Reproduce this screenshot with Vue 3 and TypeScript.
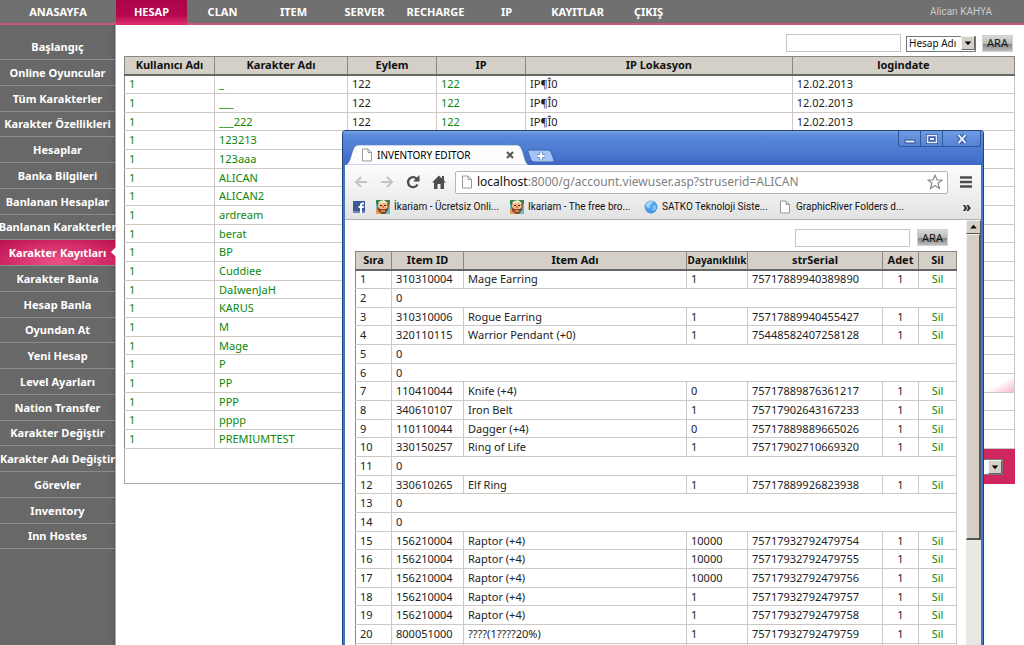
<script setup lang="ts">
interface LogRow {
  user: string
  name: string
  action?: string
  ip?: string
  place?: string
  date?: string
}

interface Item {
  id: string
  name?: string
  durability?: string
  serial?: string
}

const topMenu: string[] = ['HESAP', 'CLAN', 'ITEM', 'SERVER', 'RECHARGE', 'IP', 'KAYITLAR', 'ÇIKIŞ']
const activeTop = 'HESAP'

const sideMenu: string[] = [
  'Başlangıç', 'Online Oyuncular', 'Tüm Karakterler', 'Karakter Özellikleri', 'Hesaplar',
  'Banka Bilgileri', 'Banlanan Hesaplar', 'Banlanan Karakterler', 'Karakter Kayıtları',
  'Karakter Banla', 'Hesap Banla', 'Oyundan At', 'Yeni Hesap', 'Level Ayarları',
  'Nation Transfer', 'Karakter Değiştir', 'Karakter Adı Değiştir', 'Görevler', 'Inventory', 'Inn Hostes',
]
const activeSide = 'Karakter Kayıtları'

const full = { action: '122', ip: '122', place: 'IP¶Î0', date: '12.02.2013' }
const logs: LogRow[] = [
  { user: '1', name: '_', ...full },
  { user: '1', name: '___', ...full },
  { user: '1', name: '___222', ...full },
  ...[
    '123213', '123aaa', 'ALICAN', 'ALICAN2', 'ardream', 'berat', 'BP', 'Cuddiee', 'DaIwenJaH',
    'KARUS', 'M', 'Mage', 'P', 'PP', 'PPP', 'pppp', 'PREMIUMTEST',
  ].map((name) => ({ user: '1', name })),
]

const items: Item[] = [
  { id: '310310004', name: 'Mage Earring', durability: '1', serial: '75717889940389890' },
  { id: '0' },
  { id: '310310006', name: 'Rogue Earring', durability: '1', serial: '75717889940455427' },
  { id: '320110115', name: 'Warrior Pendant (+0)', durability: '1', serial: '75448582407258128' },
  { id: '0' },
  { id: '0' },
  { id: '110410044', name: 'Knife (+4)', durability: '0', serial: '75717889876361217' },
  { id: '340610107', name: 'Iron Belt', durability: '1', serial: '75717902643167233' },
  { id: '110110044', name: 'Dagger (+4)', durability: '0', serial: '75717889889665026' },
  { id: '330150257', name: 'Ring of Life', durability: '1', serial: '75717902710669320' },
  { id: '0' },
  { id: '330610265', name: 'Elf Ring', durability: '1', serial: '75717889926823938' },
  { id: '0' },
  { id: '0' },
  { id: '156210004', name: 'Raptor (+4)', durability: '10000', serial: '75717932792479754' },
  { id: '156210004', name: 'Raptor (+4)', durability: '10000', serial: '75717932792479755' },
  { id: '156210004', name: 'Raptor (+4)', durability: '10000', serial: '75717932792479756' },
  { id: '156210004', name: 'Raptor (+4)', durability: '1', serial: '75717932792479757' },
  { id: '156210004', name: 'Raptor (+4)', durability: '1', serial: '75717932792479758' },
  { id: '800051000', name: '????(1????20%)', durability: '1', serial: '75717932792479759' },
]

const bookmarks = [
  { icon: 'fb', text: '' },
  { icon: 'face', text: 'İkariam - Ücretsiz Onli...' },
  { icon: 'face', text: 'Ikariam - The free bro...' },
  { icon: 'globe', text: 'SATKO Teknoloji Siste...' },
  { icon: 'page', text: 'GraphicRiver Folders d...' },
]
</script>

<template>
  <div class="app">
    <header class="topbar">
      <nav class="topnav" aria-label="Ana menü">
        <a href="#" class="home">ANASAYFA</a>
        <a v-for="t in topMenu" :key="t" href="#" :class="{ active: t === activeTop }">{{ t }}</a>
      </nav>
      <span class="who">Alican KAHYA</span>
    </header>

    <div class="body">
      <nav class="side" aria-label="Yan menü">
        <a v-for="s in sideMenu" :key="s" href="#" :class="{ active: s === activeSide }">{{ s }}</a>
      </nav>

      <main class="main">
        <form class="search" @submit.prevent>
          <input class="box" type="text" aria-label="Arama" />
          <span class="pick">
            <select aria-label="Arama alanı"><option>Hesap Adı</option></select>
            <svg class="arrow" viewBox="0 0 13 13" aria-hidden="true"><path d="M3 5h7L6.500 9z" /></svg>
          </span>
          <button class="go" type="submit">ARA</button>
        </form>

        <table class="grid logs">
          <colgroup><col class="l1" /><col class="l2" /><col class="l3" /><col class="l3" /><col class="l4" /><col class="l5" /></colgroup>
          <thead>
            <tr><th>Kullanıcı Adı</th><th>Karakter Adı</th><th>Eylem</th><th>IP</th><th>IP Lokasyon</th><th>logindate</th></tr>
          </thead>
          <tbody>
            <tr v-for="(r, i) in logs" :key="i">
              <td><a href="#">{{ r.user }}</a></td>
              <td><a href="#">{{ r.name }}</a></td>
              <td>{{ r.action }}</td>
              <td><a v-if="r.ip" href="#">{{ r.ip }}</a></td>
              <td>{{ r.place }}</td>
              <td :class="{ glow: i === 16 }">{{ r.date }}</td>
            </tr>
          </tbody>
        </table>
        <div class="pager">
          <div class="pagebox">
            <span class="pick">
              <select aria-label="Sayfa"></select>
              <svg class="arrow" viewBox="0 0 13 13" aria-hidden="true"><path d="M3 5h7L6.500 9z" /></svg>
            </span>
          </div>
        </div>
      </main>
    </div>

    <section class="window" aria-label="INVENTORY EDITOR">
      <div class="title">
        <div class="tab">
          <svg class="tabshape" viewBox="0 0 184 20" preserveAspectRatio="none" aria-hidden="true">
            <path d="M0 20 C4 19 5 15 7 8 C9 2 10 0 14 0 H171 C175 0 176 2 178 8 C180 15 181 19 184 20 Z" fill="#fdfdfe" stroke="#4468a8" stroke-opacity=".5" />
          </svg>
          <svg class="page" viewBox="0 0 12 14" aria-hidden="true"><path d="M1.500 1h5.500l3.500 3.500V13h-9zM7 1v3.500h3.500" /></svg>
          <span class="tabname">INVENTORY EDITOR</span>
          <button class="x" type="button" aria-label="Sekmeyi kapat">
            <svg viewBox="0 0 8 8"><path d="M1 1l6 6M7 1L1 7" /></svg>
          </button>
        </div>
        <button class="newtab" type="button" aria-label="Yeni sekme">
          <svg viewBox="0 0 30 14">
            <path d="M3 1h19q2 0 3 2l3 8q1 2-2 2H9q-3 0-4-2L2 3q-1-2 1-2z" fill="#a3c4f4" stroke="#3e65ae" />
            <path d="M15 3v8M11 7h8" stroke="#7597d2" stroke-width="4" />
            <path d="M15 3.500v7M11.500 7h7" stroke="#fff" stroke-width="2" />
          </svg>
        </button>
        <div class="controls">
          <button type="button" aria-label="Küçült"><svg viewBox="0 0 12 12"><path d="M1 7h10v3H1z" fill="#e6efff" stroke="#2c4c8c" /></svg></button>
          <button type="button" aria-label="Büyüt"><svg viewBox="0 0 12 12"><path d="M1.500 2.500h9v7h-9z" fill="none" stroke="#2c4c8c" stroke-width="3" /><path d="M1.500 2.500h9v7h-9z" fill="#3a62ac" stroke="#e0ebff" stroke-width="1.500" /><path d="M4 5h4v2H4z" fill="#e0ebff" /></svg></button>
          <button type="button" class="wide" aria-label="Kapat"><svg viewBox="0 0 12 12"><path d="M2.500 2l7 8M9.500 2l-7 8" stroke="#2c4c8c" stroke-width="4" /><path d="M2.500 2l7 8M9.500 2l-7 8" stroke="#e0ebff" stroke-width="2" /></svg></button>
        </div>
      </div>

      <div class="chrome">
        <div class="tools">
          <button type="button" aria-label="Geri"><svg viewBox="0 0 14 14"><path d="M13 7H2M7 2L2 7l5 5" fill="none" stroke="#c3c4c6" stroke-width="2" /></svg></button>
          <button type="button" aria-label="İleri"><svg viewBox="0 0 14 14"><path d="M1 7h11M7 2l5 5-5 5" fill="none" stroke="#c3c4c6" stroke-width="2" /></svg></button>
          <button type="button" aria-label="Yenile"><svg viewBox="0 0 14 14"><path d="M11.500 9.500A5 5 0 1 1 10.500 3.500" fill="none" stroke="#4d4d4d" stroke-width="2.300" /><path d="M13.500 0v6.500H7z" fill="#4d4d4d" /></svg></button>
          <button type="button" aria-label="Giriş"><svg viewBox="0 0 14 14"><path d="M7 0.500L0 7.500h2V14h3.500V9h3v5H12V7.500h2l-2-2V1h-2v2.500z" fill="#4d4d4d" /></svg></button>
          <div class="omni">
            <svg class="page" viewBox="0 0 12 14" aria-hidden="true"><path d="M1.500 1h5.500l3.500 3.500V13h-9zM7 1v3.500h3.500" /></svg>
            <span class="url"><b>localhost</b>:8000/g/account.viewuser.asp?struserid=ALICAN</span>
            <svg class="star" viewBox="0 0 16 16" aria-hidden="true"><path d="M8 1l2 5h5.200L11 9.300l1.700 5.500L8 11.500l-4.700 3.300L5 9.300.8 6H6z" fill="#fff" stroke="#8b8b8b" stroke-width="1.200" stroke-linejoin="round" /></svg>
          </div>
          <button type="button" class="menu" aria-label="Menü"><svg viewBox="0 0 12 12"><path d="M0 1.500h12M0 6h12M0 10.500h12" stroke="#4d4d4d" stroke-width="2.400" /></svg></button>
        </div>
        <div class="marks">
          <a v-for="(b, i) in bookmarks" :key="i" href="#" :aria-label="b.text || 'Facebook'">
            <svg v-if="b.icon === 'fb'" viewBox="0 0 14 14"><path d="M1 1h12v12H1z" fill="#3b5998" /><path d="M1 11h12v2H1z" fill="#6d86bd" /><path d="M8 13V8H6.500V6H8V5q0-2.500 2.500-2.500H12v2h-1q-1 0-1 1V6h2l-.3 2H10v5z" fill="#fff" /></svg>
            <svg v-else-if="b.icon === 'face'" viewBox="0 0 14 14">
              <path d="M0 0h14v14H0z" fill="#58c3cf" /><path d="M0 0h14v4H0z" fill="#2f8a4c" /><path d="M0 9h5v5H0z" fill="#e0a050" />
              <path d="M1 3l3-2h7l2 4-1 5-3 4H6l-4-3z" fill="#8f3f20" /><path d="M2 4q4-2 9 0l1 3-2 2H4L2 7z" fill="#f0b984" />
              <path d="M2 3l2-2 4-1 4 3-1 1-4-1-4 1z" fill="#f2e7c8" /><path d="M4 5.500h2M8 5.500h2" stroke="#3a2218" /><path d="M6 6h2v2H6z" fill="#d97c50" /><path d="M5 10.500h4v1H5z" fill="#f5dfcd" />
            </svg>
            <svg v-else-if="b.icon === 'globe'" viewBox="0 0 14 14"><circle cx="7" cy="7" r="6.500" fill="#4f9fe6" /><path d="M2 4q3-4 7-3L8 4 6 5l0 3-4-1z" fill="#a5d6fa" /><path d="M8 6l4-1 0 4-3 2z" fill="#84c2f6" /><path d="M2 10q5 4 10 0-5 6-10 0z" fill="#3a80d0" /></svg>
            <svg v-else class="page" viewBox="0 0 12 14"><path d="M1.500 1h5.500l3.500 3.500V13h-9zM7 1v3.500h3.500" /></svg>
            <span v-if="b.text">{{ b.text }}</span>
          </a>
          <button type="button" class="more" aria-label="Diğer yer imleri">»</button>
        </div>
      </div>

      <div class="view">
        <div class="page-body">
          <form class="search" @submit.prevent>
            <input class="box" type="text" aria-label="Item ara" />
            <button class="go" type="submit">ARA</button>
          </form>
          <table class="grid items">
            <colgroup><col class="i1" /><col class="i2" /><col class="i3" /><col class="i4" /><col class="i5" /><col class="i6" /><col class="i7" /></colgroup>
            <thead>
              <tr><th>Sıra</th><th>Item ID</th><th>Item Adı</th><th class="tight">Dayanıklılık</th><th>strSerial</th><th>Adet</th><th>Sil</th></tr>
            </thead>
            <tbody>
              <tr v-for="(it, i) in items" :key="i">
                <td>{{ i + 1 }}</td>
                <template v-if="it.name">
                  <td>{{ it.id }}</td>
                  <td>{{ it.name }}</td>
                  <td>{{ it.durability }}</td>
                  <td>{{ it.serial }}</td>
                  <td class="mid">1</td>
                  <td class="mid"><a href="#">Sil</a></td>
                </template>
                <td v-else colspan="6">{{ it.id }}</td>
              </tr>
              <tr><td></td><td></td><td></td><td></td><td></td><td></td><td></td></tr>
            </tbody>
          </table>
        </div>
        <div class="scroll" aria-hidden="true">
          <div class="up"><svg viewBox="0 0 13 13"><path d="M3 8h7L6.500 4z" /></svg></div>
          <div class="thumb"></div>
        </div>
      </div>
    </section>
  </div>
</template>

<style>
body {
  margin: 0;
  background: #fff;
}
</style>

<style scoped>
.app {
  position: relative;
  display: flex;
  flex-direction: column;
  height: 100vh;
  overflow: hidden;
  background: #fff;
  color: #222;
  font: 11px/16px "Noto Sans", Tahoma, sans-serif;
}
.app * {
  box-sizing: border-box;
}
a {
  text-decoration: none;
}
button {
  padding: 0;
  border: 0;
  background: none;
  font: inherit;
  color: inherit;
}
svg {
  display: block;
}

.topbar {
  display: flex;
  justify-content: space-between;
  height: 25px;
  flex: none;
  background: #707070;
  border-bottom: 2px solid #c4587f;
}
.topnav {
  display: flex;
}
.topnav a {
  width: 71px;
  color: #fff;
  font-weight: bold;
  line-height: 24px;
  text-align: center;
}
.topnav .home {
  width: 116px;
}
.topnav .active {
  height: 25px;
  background: linear-gradient(#ac0448, #b5074e 60%, #e0306f);
}
.who {
  padding-right: 32px;
  color: #ccc;
  font-family: Roboto, Tahoma, sans-serif;
  font-size: 10px;
  line-height: 24px;
}

.body {
  display: flex;
  flex: 1;
  min-height: 0;
}
.side {
  width: 116px;
  flex: none;
  padding-top: 9px;
  background: linear-gradient(90deg, #686868 110px, #5c5c5c);
  border-right: 1px solid #aaa;
}
.side a {
  position: relative;
  display: flex;
  align-items: center;
  justify-content: center;
  height: 26px;
  border-bottom: 1px solid #8b8b8b;
  color: #fff;
  font-weight: bold;
  white-space: nowrap;
}
.side a:nth-child(4n) {
  height: 25px;
}
.side .active {
  background: radial-gradient(ellipse at 50% 90%, #e95287, #d22b67 60%, #b80f50);
}
.side .active::after {
  content: "";
  position: absolute;
  right: -1px;
  top: 7px;
  border: 5px solid transparent;
  border-left: 0;
  border-right-color: #fff;
}

.main {
  flex: 1;
  min-width: 0;
  padding: 9px 9px 0 8px;
}
.search {
  display: flex;
  align-items: center;
  justify-content: flex-end;
}
.main .search {
  height: 18px;
  margin-bottom: 4px;
  padding-right: 2px;
}
.box {
  width: 115px;
  height: 18px;
  padding: 0 4px;
  border: 1px solid #c6c6c6;
  background: #fff;
  font: inherit;
}
.pick {
  position: relative;
  width: 70px;
  height: 16px;
  margin: 0 6px 0 5px;
}
.pick select {
  width: 100%;
  height: 100%;
  padding: 0 0 0 2px;
  border: 1px solid #777;
  border-radius: 0;
  appearance: none;
  background: #fff;
  color: #111;
  font: 10px/13px "Noto Sans", Tahoma, sans-serif;
}
.arrow {
  position: absolute;
  right: 1px;
  top: 1px;
  width: 14px;
  height: 14px;
  background: #d4d0c8;
  border: 1px solid;
  border-color: #f5f5f5 #666 #666 #f5f5f5;
  pointer-events: none;
}
.go {
  width: 31px;
  height: 17px;
  border: 1px solid #d2d2d2;
  background: linear-gradient(#d9d9d9, #b9b9b9 50%, #858585 55%, #bdbdbd);
  color: #111;
  line-height: 14px;
}

.grid {
  width: 100%;
  border-collapse: collapse;
  table-layout: fixed;
  background: #fff;
}
.grid th {
  height: 18px;
  padding: 0;
  border: 1px solid #8a8782;
  background: #d4d0c8;
  color: #111;
  line-height: 16px;
  white-space: nowrap;
}
.grid thead th {
  border-bottom: 2px solid #666;
}
.grid .tight {
  font-size: 10px;
}
.grid td {
  height: 19px;
  padding: 0 4px;
  border: 1px solid #cdc8c4;
  line-height: 16px;
  white-space: nowrap;
}
.grid tr:nth-child(3n) td {
  height: 18px;
}
.grid td:first-child {
  border-left-color: #888;
}
.grid td a {
  color: #0c870c;
}
.grid .mid {
  text-align: center;
}
.grid .glow {
  background: linear-gradient(150deg, transparent 52%, #f9b8d0) right / 30px 100% no-repeat;
}
.l1 { width: 90px; }
.l2 { width: 133px; }
.l3 { width: 89px; }
.l4 { width: 30%; }
.l5 { width: 25%; }

.pager {
  display: flex;
  justify-content: flex-end;
  height: 35px;
  border: 1px solid #aaa;
  border-top: 0;
}
.pagebox {
  display: flex;
  align-items: center;
  justify-content: flex-end;
  width: 180px;
  padding-right: 6px;
  margin: 0 -1px -1px 0;
  background: #d0265f;
}

.window {
  position: absolute;
  left: 342px;
  right: 40px;
  top: 130px;
  bottom: 0;
  display: flex;
  flex-direction: column;
  overflow: hidden;
  border: 1px solid #244578;
  border-bottom: 0;
  border-radius: 4px 4px 0 0;
  padding: 0 2px;
  background: #4574c8;
}
.title {
  display: flex;
  align-items: flex-end;
  flex: none;
  height: 34px;
  margin: 0 -2px;
  padding-left: 2px;
  background: linear-gradient(#7ba7e4, #5b8cda 4px, #3e69c7);
}
.tab {
  position: relative;
  display: flex;
  align-items: center;
  width: 184px;
  height: 20px;
  padding: 0 15px 0 16px;
}
.tabshape {
  position: absolute;
  inset: 0;
  width: 100%;
  height: 100%;
}
.page {
  position: relative;
  flex: none;
  width: 12px;
  height: 14px;
  fill: #fff;
  stroke: #999;
}
.tabname {
  position: relative;
  flex: 1;
  padding-left: 4px;
  color: #000;
  font-size: 10px;
}
.x {
  position: relative;
}
.x svg {
  width: 8px;
  height: 8px;
  stroke: #555;
  stroke-width: 2;
}
.newtab {
  margin: 0 auto 2px -3px;
}
.newtab svg {
  width: 30px;
  height: 14px;
}
.controls {
  display: flex;
  align-self: flex-start;
  height: 16px;
  margin-right: 2px;
  border: 1px solid #2f559b;
  border-top: 0;
  border-radius: 0 0 3px 3px;
  background: linear-gradient(#6d9be3, #5583d4);
}
.controls button {
  display: flex;
  align-items: center;
  justify-content: center;
  width: 22px;
  border-right: 1px solid #2f559b;
}
.controls .wide {
  width: 37px;
  border: 0;
}
.controls svg {
  width: 12px;
  height: 12px;
}

.chrome {
  flex: none;
  height: 55px;
  background: linear-gradient(#fdfdfe, #e2e2e2);
  border-bottom: 1px solid #b0b0b0;
}
.tools {
  display: flex;
  align-items: center;
  gap: 12px;
  height: 33px;
  padding: 1px 9px 0 9px;
}
.tools button svg {
  width: 14px;
  height: 14px;
}
.omni {
  display: flex;
  align-items: center;
  flex: 1;
  min-width: 0;
  height: 23px;
  margin: 0 0 0 -3px;
  padding: 0 4px 0 5px;
  border: 1px solid #b5b5b5;
  border-radius: 2px;
  background: #fff;
}
.url {
  flex: 1;
  padding-left: 4px;
  color: #808080;
  font-size: 12px;
  white-space: nowrap;
}
.url b {
  color: #111;
  font-weight: normal;
}
.star {
  width: 16px;
  height: 16px;
}
.tools .menu svg {
  width: 12px;
  height: 12px;
}
.marks {
  display: grid;
  grid-template-columns: 24px 134px 134px 134px 1fr auto;
  align-items: center;
  height: 18px;
  padding: 0 10px 0 7px;
}
.marks a {
  display: flex;
  align-items: center;
  gap: 4px;
  color: #111;
  font-family: Roboto, Tahoma, sans-serif;
  font-size: 10px;
  white-space: nowrap;
}
.marks svg {
  flex: none;
  width: 14px;
  height: 14px;
}
.more {
  height: 18px;
  font-size: 14px;
  line-height: 10px;
  font-weight: bold;
}

.view {
  display: flex;
  flex: 1;
  min-height: 0;
  background: #fff;
}
.page-body {
  flex: 1;
  min-width: 0;
  padding: 8px 9px 0 10px;
  overflow: hidden;
}
.page-body .search {
  gap: 7px;
  height: 19px;
  margin-bottom: 4px;
  padding-right: 9px;
}
.i1 { width: 36px; }
.i2 { width: 72px; }
.i4 { width: 61px; }
.i5 { width: 135px; }
.i6 { width: 36px; }
.i7 { width: 38px; }

.scroll {
  width: 15px;
  flex: none;
  background: #e9e8e5;
}
.up,
.thumb {
  border: 1px solid;
  border-color: #f2f2f2 #555 #555 #f2f2f2;
  background: #d4d0c8;
}
.up {
  height: 14px;
}
.up svg {
  width: 13px;
  height: 12px;
}
.thumb {
  height: 72%;
  border-width: 1px 2px 2px 1px;
}
</style>
